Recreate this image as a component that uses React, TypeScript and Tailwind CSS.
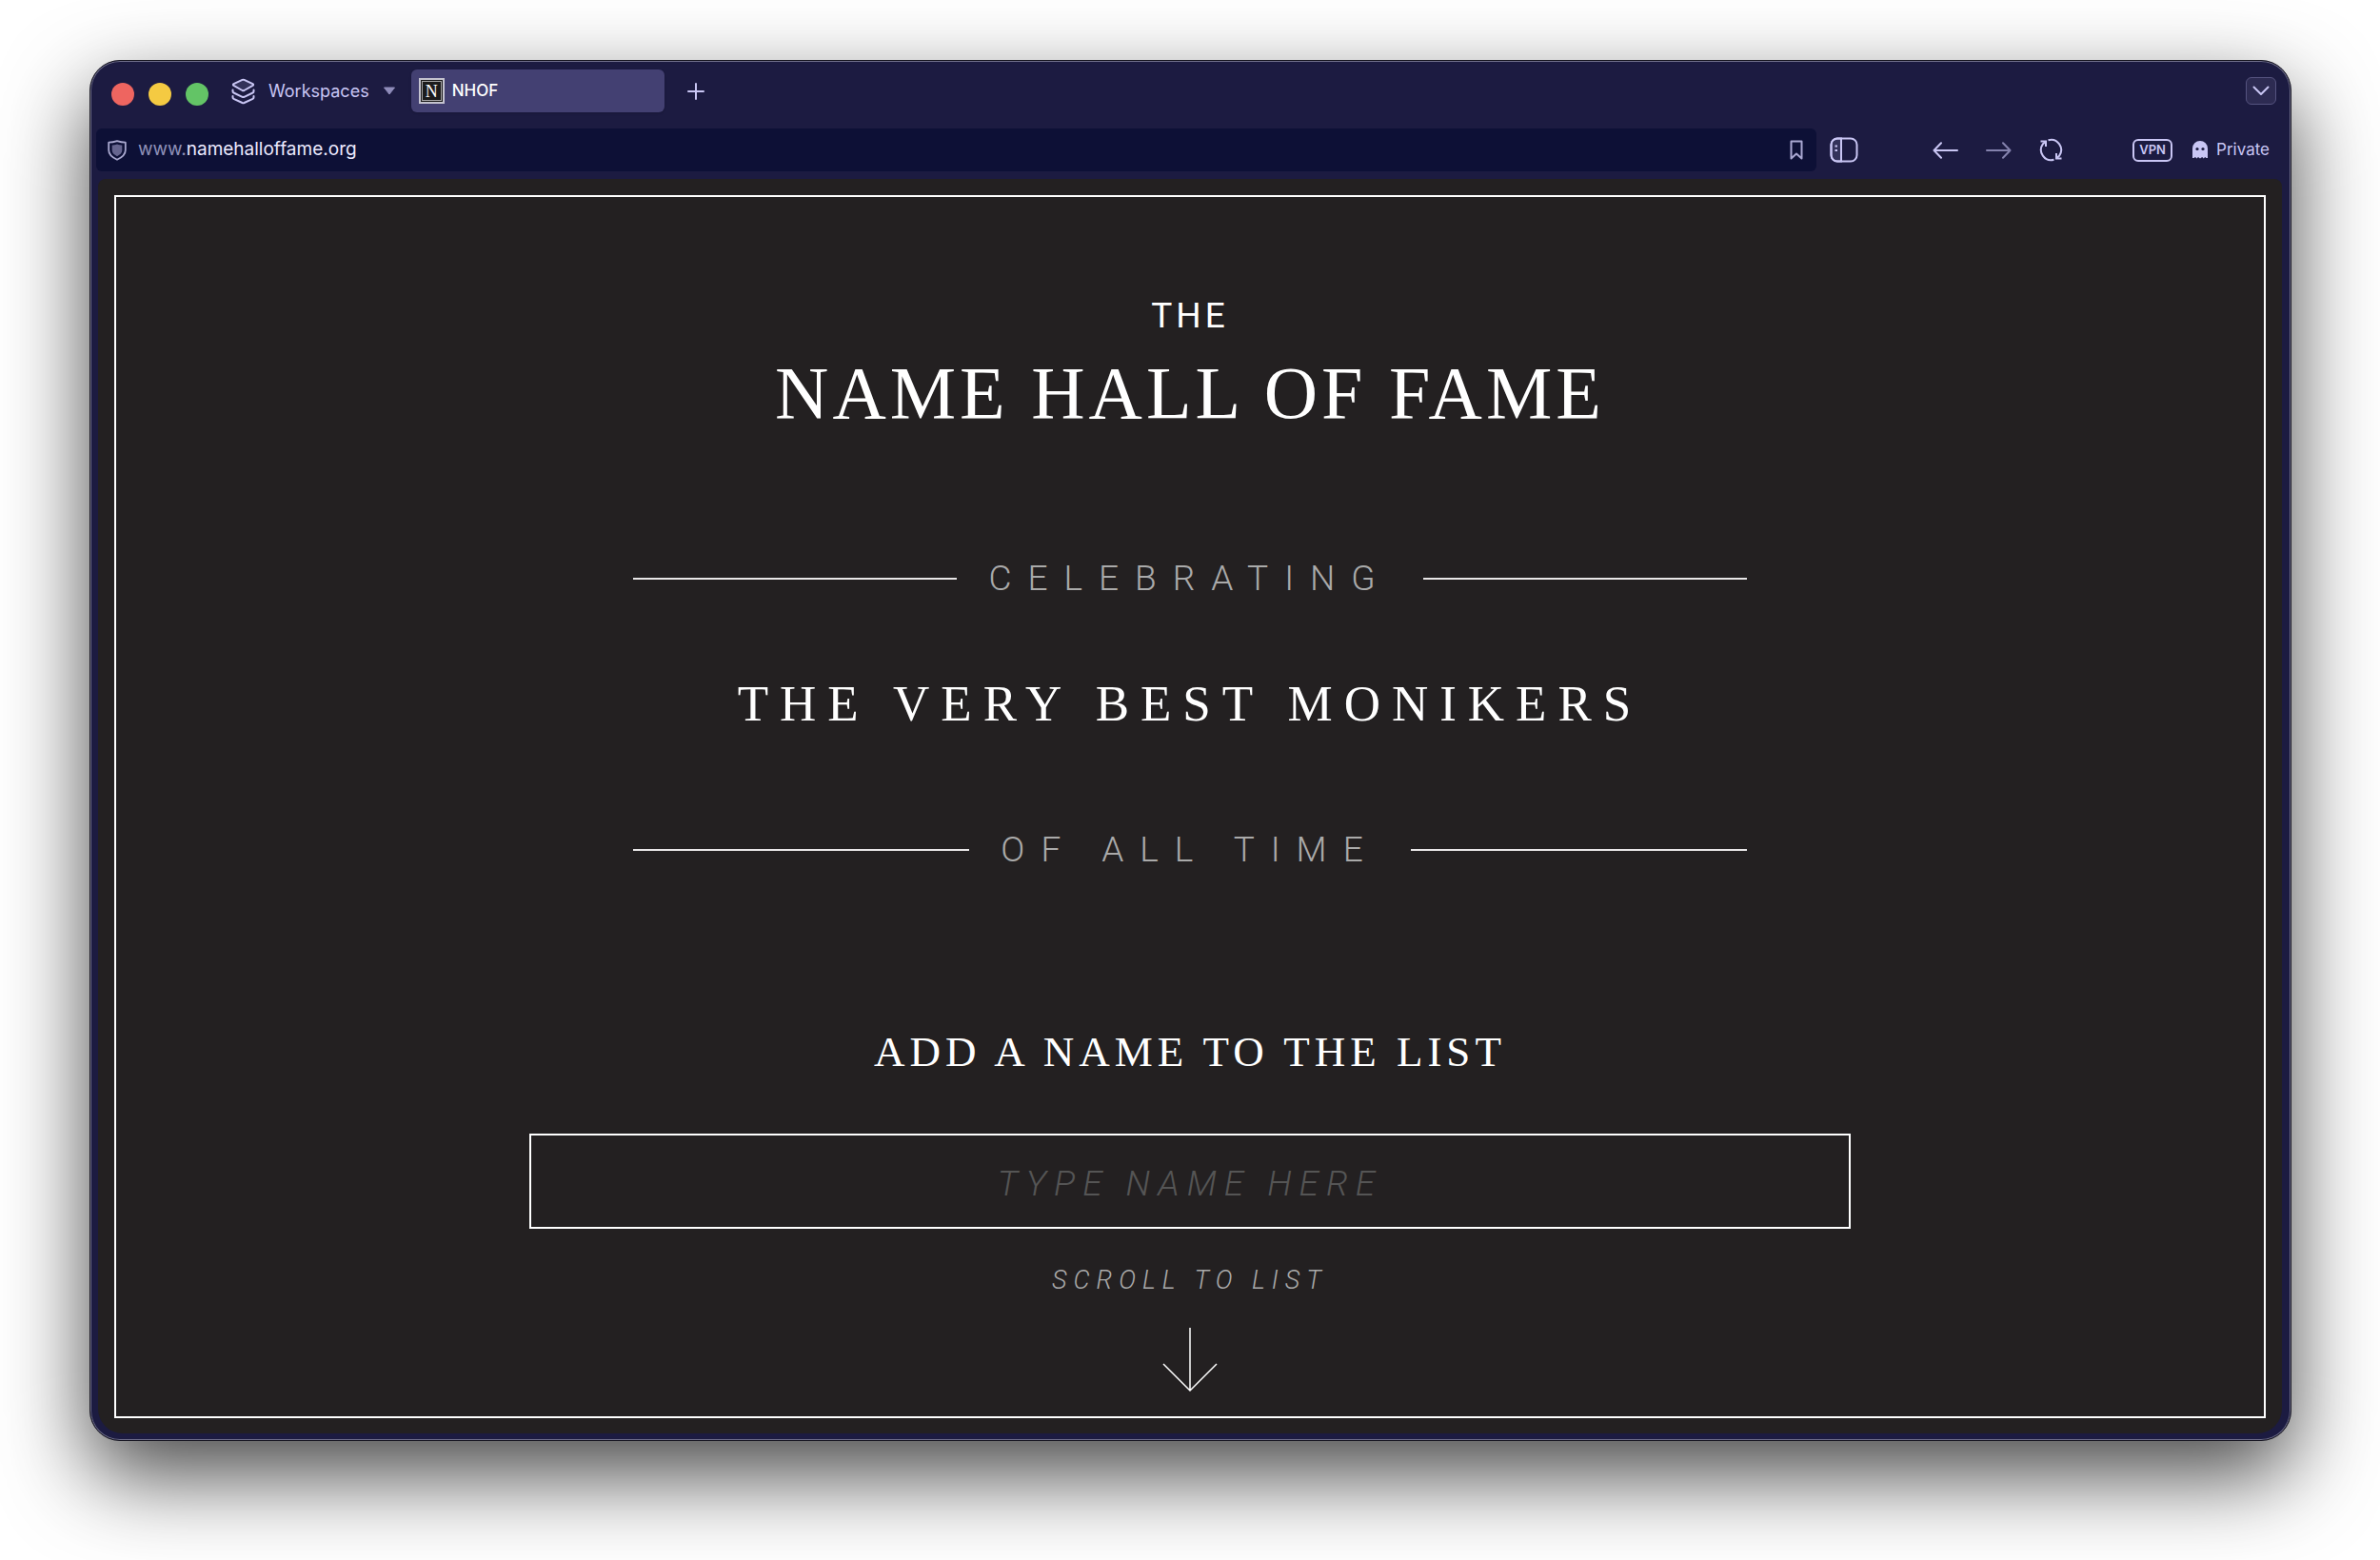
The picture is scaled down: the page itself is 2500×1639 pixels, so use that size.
import type { ReactNode } from "react";

const serif = "font-['Liberation_Serif',serif]";
const sans = "font-[Roboto,sans-serif] font-light";

const trafficLights = [
  { label: "Close", color: "bg-[#ee6560]" },
  { label: "Minimize", color: "bg-[#f4ca42]" },
  { label: "Zoom", color: "bg-[#63c466]" },
];

function TabBar() {
  return (
    <div className="flex items-start pt-[9px] pb-[17px] pl-[22px] pr-[15px]">
      <div className="flex gap-[15px] pt-[14px]">
        {trafficLights.map((light) => (
          <button
            key={light.label}
            aria-label={light.label}
            className={`size-6 rounded-full ${light.color}`}
          />
        ))}
      </div>

      <button className="ml-6 flex h-[45px] items-center text-lg text-[#c9c6f4]">
        <svg width="25" height="28" viewBox="0 0 25 28" fill="none" stroke="currentColor" strokeWidth="2" strokeLinejoin="round" strokeLinecap="round">
          <path d="M11.500 1.900Q12.500 1.400 13.500 1.900L22.500 6.200Q23.800 7 22.500 7.900L13.500 13Q12.500 13.500 11.500 13L2.500 7.900Q1.200 7 2.500 6.200z" fill="#33325a" />
          <path d="M1.500 12.500v1.500Q1.500 15 2.500 15.500l9 4.300q1 .400 2 0l9-4.300q1-.500 1-1.500v-1.500" />
          <path d="M1.500 19v1.300q0 1 1 1.500l9 4.200q1 .400 2 0l9-4.200q1-.500 1-1.500V19" />
        </svg>
        <span className="ml-[14px]">Workspaces</span>
        <svg className="ml-[14px]" width="14" height="9" viewBox="0 0 14 9" fill="#8f8cba">
          <path d="M1.500 1h11L7 8z" stroke="#8f8cba" strokeLinejoin="round" />
        </svg>
      </button>

      <button className="ml-4 flex h-[45px] w-[266px] items-center gap-2 rounded-md bg-[#434072] px-2 text-[17px] font-medium text-white shadow-sm">
        <span className="flex size-[27px] items-center justify-center border-2 border-[#c4c3cf] bg-[#1c1b1c] p-px">
          <span className={`flex size-full items-center justify-center border border-[#a5a4a6] text-lg leading-none font-normal ${serif}`}>
            N
          </span>
        </span>
        NHOF
      </button>

      <button aria-label="New tab" className="ml-6 flex h-[45px] items-center text-[#c9c6f4]">
        <svg width="18" height="18" viewBox="0 0 18 18" stroke="currentColor" strokeWidth="2" strokeLinecap="round">
          <path d="M9 1v16M1 9h16" />
        </svg>
      </button>

      <div className="ml-auto flex h-[45px] items-center">
        <button
          aria-label="Show tabs"
          className="flex h-[29px] w-8 items-center justify-center rounded-md border border-[#55537f] bg-[#2d2b52] text-[#c9c6f4]"
        >
          <svg width="18" height="11" viewBox="0 0 18 11" fill="none" stroke="currentColor" strokeWidth="2" strokeLinecap="round" strokeLinejoin="round">
            <path d="m1.500 1.500 7.500 7.500 7.500-7.500" />
          </svg>
        </button>
      </div>
    </div>
  );
}

function AddressBar() {
  return (
    <div className="flex items-center pr-[22px] pb-2 pl-[6px] text-[#c9c6f4]">
      <div className="flex h-[45px] flex-1 items-center rounded-md bg-[#0d1036] pr-[14px] pl-3">
        <svg width="20" height="22" viewBox="0 0 20 22" fill="none">
          <path d="M10 1.200c3 1 5.600 1.500 8.800 1.500v8.100c0 4.500-3.600 7.600-8.800 10-5.200-2.400-8.800-5.500-8.800-10V2.700c3.200 0 5.800-.500 8.800-1.500z" stroke="#a9a8cf" strokeWidth="1.800" strokeLinejoin="round" />
          <path d="M10 4.500c2 .700 3.600 1 5.300 1v5.300c0 2.800-2 4.700-5.300 6.500-3.300-1.800-5.300-3.700-5.300-6.500V5.500c1.700 0 3.300-.300 5.300-1z" fill="#66658f" />
        </svg>
        <a href="#" className="ml-3 text-[19px] text-[#8f90b8]">
          www.<span className="text-[#eceaff]">namehalloffame.org</span>
        </a>
        <button aria-label="Bookmark" className="ml-auto">
          <svg width="14" height="21" viewBox="0 0 14 21" fill="none" stroke="#a9a7d2" strokeWidth="2" strokeLinejoin="round">
            <path d="M1.500 1.500h11v18L7 14.500l-5.500 5z" />
          </svg>
        </button>
      </div>

      <button aria-label="Sidebar" className="ml-[14px]">
        <svg width="30" height="27" viewBox="0 0 30 27" fill="none" stroke="currentColor" strokeWidth="2">
          <path d="M12 1.500H8A6.500 6.500 0 0 0 1.500 8v11A6.500 6.500 0 0 0 8 25.500h4z" fill="#33325a" />
          <rect x="1.500" y="1.500" width="27" height="24" rx="6.500" />
          <path d="M12 1.500v24M5.500 9.500h2.500M5.500 14h2.500" />
        </svg>
      </button>

      <div className="ml-[78px] flex items-center gap-[29px]">
        <button aria-label="Back">
          <svg width="27" height="18" viewBox="0 0 27 18" fill="none" stroke="currentColor" strokeWidth="2" strokeLinecap="round" strokeLinejoin="round">
            <path d="M26 9H1.500M9 1.200 1.500 9 9 16.800" />
          </svg>
        </button>
        <button aria-label="Forward" className="text-[#8482ad]">
          <svg width="27" height="18" viewBox="0 0 27 18" fill="none" stroke="currentColor" strokeWidth="2" strokeLinecap="round" strokeLinejoin="round">
            <path d="M1 9h24.500M18 1.200 25.500 9 18 16.800" />
          </svg>
        </button>
        <button aria-label="Reload">
          <svg width="25" height="25" viewBox="0 0 25 25" fill="none" stroke="currentColor" strokeWidth="2">
            <path d="M9.500 2.200A10.700 10.700 0 0 1 21 18.800L18 21.500M15.500 22.800A10.700 10.700 0 0 1 4 6.200L7 3.500" />
            <path d="M1.500 3.500H7V9M23.500 21.500H18V16" />
          </svg>
        </button>
      </div>

      <button className="ml-[73px] flex h-6 w-[42px] items-center justify-center rounded-md border-2 border-[#c9c6f4] text-[13px] leading-none font-semibold">
        VPN
      </button>
      <div className="ml-[21px] flex items-center gap-[9px] text-[17px]">
        <svg width="16" height="19" viewBox="0 0 16 19">
          <path d="M0 8a8 8 0 0 1 16 0v10h-1.500l-1.300-1-1.500 1.500-1.500-1.500L8 18.500 6 17l-1.500 1.500L3 17l-1.500 1H0z" fill="currentColor" />
          <circle cx="5" cy="8.500" r="1.600" fill="#1c1b41" />
          <circle cx="11" cy="8.500" r="1.600" fill="#1c1b41" />
        </svg>
        Private
      </div>
    </div>
  );
}

function Divider({ children }: { children: ReactNode }) {
  return (
    <div className="flex w-full max-w-[1170px] items-center">
      <span className="h-0.5 flex-1 bg-[#e8e6e7]" />
      <p className={`px-[33px] text-[37px]/10 tracking-[17px] text-[#aaa] ${sans}`}>{children}</p>
      <span className="h-0.5 flex-1 bg-[#e8e6e7]" />
    </div>
  );
}

function HallOfFame() {
  return (
    <main className="mr-[9px] mb-[7px] ml-2 rounded-t-lg rounded-b-[26px] bg-[#232021] px-[17px] pt-[17px] pb-4">
      <div className="flex flex-col items-center border-2 border-white pt-[105px] pb-[25px] text-center text-white">
        <h1 className="flex flex-col items-center">
          <span className="font-[Roboto,sans-serif] text-[37px]/10 tracking-[4px]">THE</span>
          <span className={`mt-[21px] text-[78px]/20 tracking-[4px] ${serif}`}>NAME HALL OF FAME</span>
        </h1>

        <div className="mt-[135px] flex w-full flex-col items-center">
          <Divider>CELEBRATING</Divider>
          <p className={`mt-[83px] text-[53px]/14 tracking-[12px] ${serif}`}>THE VERY BEST MONIKERS</p>
          <div className="mt-[106px] flex w-full justify-center">
            <Divider>OF ALL TIME</Divider>
          </div>
        </div>

        <label htmlFor="name" className={`mt-[168px] text-[45px]/12 tracking-[5px] ${serif}`}>
          ADD A NAME TO THE LIST
        </label>
        <input
          id="name"
          type="text"
          placeholder="TYPE NAME HERE"
          className={`mt-[62px] h-[100px] w-full max-w-[1388px] border-2 border-white bg-transparent pt-1 text-center text-[37px] tracking-[8px] italic outline-none placeholder:text-[#555] ${sans}`}
        />

        <a href="#list" className="mt-[38px] flex flex-col items-center gap-[34px]">
          <span className={`text-[27px]/8 tracking-[7px] text-[#aaa] italic ${sans}`}>SCROLL TO LIST</span>
          <svg width="58" height="68" viewBox="0 0 58 68" fill="none" stroke="white" strokeWidth="1.500">
            <path d="M29 0v66M1 38l28 28 28-28" />
          </svg>
        </a>
      </div>
    </main>
  );
}

export default function App() {
  return (
    <div className="min-h-screen bg-white pt-[63px] pr-[93px] pl-[94px] font-[Inter,sans-serif]">
      <div className="rounded-[32px] border border-[#15141f] bg-[#1c1b41] shadow-[inset_0_0_0_1px_#6f6e8a,0_36px_90px_rgba(0,0,0,0.72)]">
        <TabBar />
        <AddressBar />
        <HallOfFame />
      </div>
    </div>
  );
}
